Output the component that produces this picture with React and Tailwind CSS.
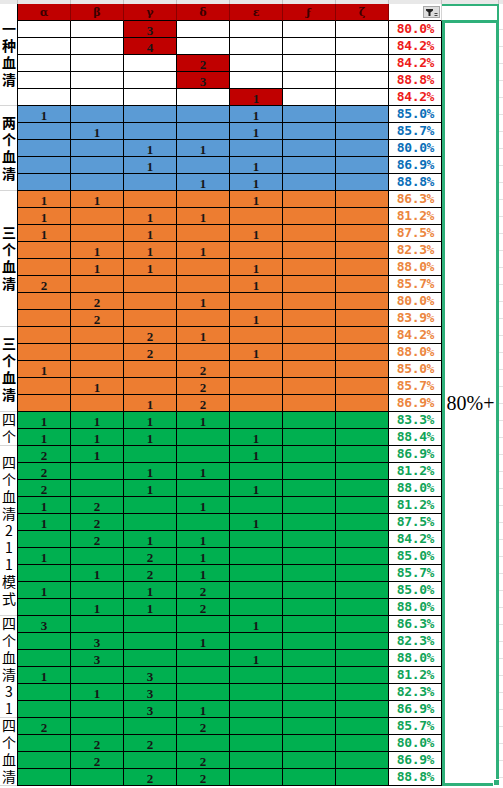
import React from 'react';

const ROWS = [
  ['red', '0030000', '80.0%'],
  ['red', '0040000', '84.2%'],
  ['red', '0002000', '84.2%'],
  ['red', '0003000', '88.8%'],
  ['red', '0000100', '84.2%'],
  ['blue', '1000100', '85.0%'],
  ['blue', '0100100', '85.7%'],
  ['blue', '0011000', '80.0%'],
  ['blue', '0010100', '86.9%'],
  ['blue', '0001100', '88.8%'],
  ['orange', '1100100', '86.3%'],
  ['orange', '1011000', '81.2%'],
  ['orange', '1010100', '87.5%'],
  ['orange', '0111000', '82.3%'],
  ['orange', '0110100', '88.0%'],
  ['orange', '2000100', '85.7%'],
  ['orange', '0201000', '80.0%'],
  ['orange', '0200100', '83.9%'],
  ['orange', '0021000', '84.2%'],
  ['orange', '0020100', '88.0%'],
  ['orange', '1002000', '85.0%'],
  ['orange', '0102000', '85.7%'],
  ['orange', '0012000', '86.9%'],
  ['green', '1111000', '83.3%'],
  ['green', '1110100', '88.4%'],
  ['green', '2100100', '86.9%'],
  ['green', '2011000', '81.2%'],
  ['green', '2010100', '88.0%'],
  ['green', '1201000', '81.2%'],
  ['green', '1200100', '87.5%'],
  ['green', '0211000', '84.2%'],
  ['green', '1021000', '85.0%'],
  ['green', '0121000', '85.7%'],
  ['green', '1012000', '85.0%'],
  ['green', '0112000', '88.0%'],
  ['green', '3000100', '86.3%'],
  ['green', '0301000', '82.3%'],
  ['green', '0300100', '88.0%'],
  ['green', '1030000', '81.2%'],
  ['green', '0130000', '82.3%'],
  ['green', '0031000', '86.9%'],
  ['green', '2002000', '85.7%'],
  ['green', '0220000', '80.0%'],
  ['green', '0202000', '86.9%'],
  ['green', '0022000', '88.8%'],
];

const FILL = {
  red: 'bg-[#c00000]',
  blue: 'bg-[#5b9bd5]',
  orange: 'bg-[#ed7d31]',
  green: 'bg-[#00b050]',
};

const PCT = {
  red: 'text-[#ee1b1b]',
  blue: 'text-[#0b6fb8]',
  orange: 'text-[#ec8640]',
  green: 'text-[#10a458]',
};

const HEADS = ['α', 'β', 'γ', 'δ', 'ε', 'ϝ', 'ζ'];

// merged label cells down the left edge
const LABELS = [
  { h: 'h-[102px]', text: '一种血清', bold: true },
  { h: 'h-[85px]', text: '两个血清', bold: true },
  { h: 'h-[136px]', text: '三个血清', bold: true },
  { h: 'h-[85px]', text: '三个血清', bold: true },
  { h: 'h-[34px]', text: '四个' },
  { h: 'h-[170px]', text: '四个血清211模式' },
  { h: 'h-[102px]', text: '四个血清31' },
  { h: 'h-[68px]', text: '四个血清' },
];

const FilterButton = () => (
  <div className="ml-auto mr-[1px] flex h-[12px] w-[17px] items-center justify-center border border-[#a8a8a8] bg-[#dedede]">
    <svg width="13" height="9" viewBox="0 0 13 9">
      <path d="M1 1h7v1.5L5.5 4.5V8h-2V4.5L1 2.5z" fill="#222" />
      <rect x="9.5" y="5" width="3" height="1" fill="#444" />
      <rect x="9.5" y="7" width="3" height="1" fill="#444" />
    </svg>
  </div>
);

const DataRow = ({ group, values, pct }) => (
  <div className="flex h-[17px]">
    {values.split('').map((v, i) => {
      const filled = group !== 'red' || v !== '0';
      return (
        <div
          key={i}
          className={`h-[17px] w-[53px] shrink-0 border-b border-r border-black text-center font-['Liberation_Serif',serif] text-[13px] font-bold leading-[20px] text-[#161616] ${filled ? FILL[group] : 'bg-white'}`}
        >
          {v !== '0' ? v : ''}
        </div>
      );
    })}
    <div
      className={`h-[17px] w-[53px] shrink-0 border-b border-r border-black bg-white pr-[7px] text-right font-['DejaVu_Sans_Mono',monospace] text-[13px] font-bold leading-[16px] tracking-[-0.4px] ${PCT[group]}`}
    >
      {pct}
    </div>
  </div>
);

export default function App() {
  return (
    <div className="h-[788px] w-[503px] overflow-hidden bg-white">
      <div className="flex h-[4px] bg-[#e8e8e8]">
        <div className="w-[18px] border-r border-[#c4c4c4]" />
        {[0, 1, 2, 3, 4, 5, 6, 7].map((i) => (
          <div key={i} className="w-[53px] border-r border-[#c4c4c4]" />
        ))}
        <div className="w-[57px] border-r border-[#c4c4c4]" />
      </div>

      <div className="flex">
        <div className="w-[17px] shrink-0 font-['Noto_Sans_CJK_SC',sans-serif] text-[14px] text-black">
          {LABELS.map((l, i) => (
            <div
              key={i}
              className={`flex items-center justify-center border-b border-[#d6d6d6] ${l.h} ${l.bold ? 'font-bold' : 'font-normal'}`}
            >
              <span className="whitespace-nowrap pt-[3px] leading-[17px] tracking-[3px] [text-orientation:upright] [writing-mode:vertical-rl]">
                {l.text}
              </span>
            </div>
          ))}
        </div>

        <div className="w-[425px] shrink-0 border-l border-black">
          <div className="flex h-[17px]">
            {HEADS.map((h) => (
              <div
                key={h}
                className="h-[17px] w-[53px] shrink-0 border-b border-r border-b-black border-r-[#8a0000] bg-[#c00000] text-center font-['DejaVu_Serif',serif] text-[11px] font-bold leading-[17px] text-[#3a0000]"
              >
                {h}
              </div>
            ))}
            <div className="flex h-[17px] w-[53px] shrink-0 items-center border-b border-r border-b-black border-r-[#d4d4d4] bg-white">
              <FilterButton />
            </div>
          </div>
          {ROWS.map(([g, v, p], i) => (
            <DataRow key={i} group={g} values={v} pct={p} />
          ))}
        </div>

        <div className="w-[57px] shrink-0">
          <div className="h-[16px] border-r-2 border-t-2 border-[#2fb07a] bg-white" />
          <div className="relative flex h-[766px] items-center justify-center border-[3px] border-[#2fb07a] bg-white">
            <span className="font-['Liberation_Serif',serif] text-[20px] leading-none text-black">80%+</span>
            <div className="absolute -bottom-[2px] -right-[3px] h-[5px] w-[5px] bg-[#2fb07a] ring-1 ring-white" />
          </div>
        </div>

        <div className="w-[4px] shrink-0">
          <div className="h-[9px]" />
          {ROWS.map((_, i) => (
            <div key={i} className="h-[17px] border-b border-[#e2e2e2]" />
          ))}
        </div>
      </div>
    </div>
  );
}
